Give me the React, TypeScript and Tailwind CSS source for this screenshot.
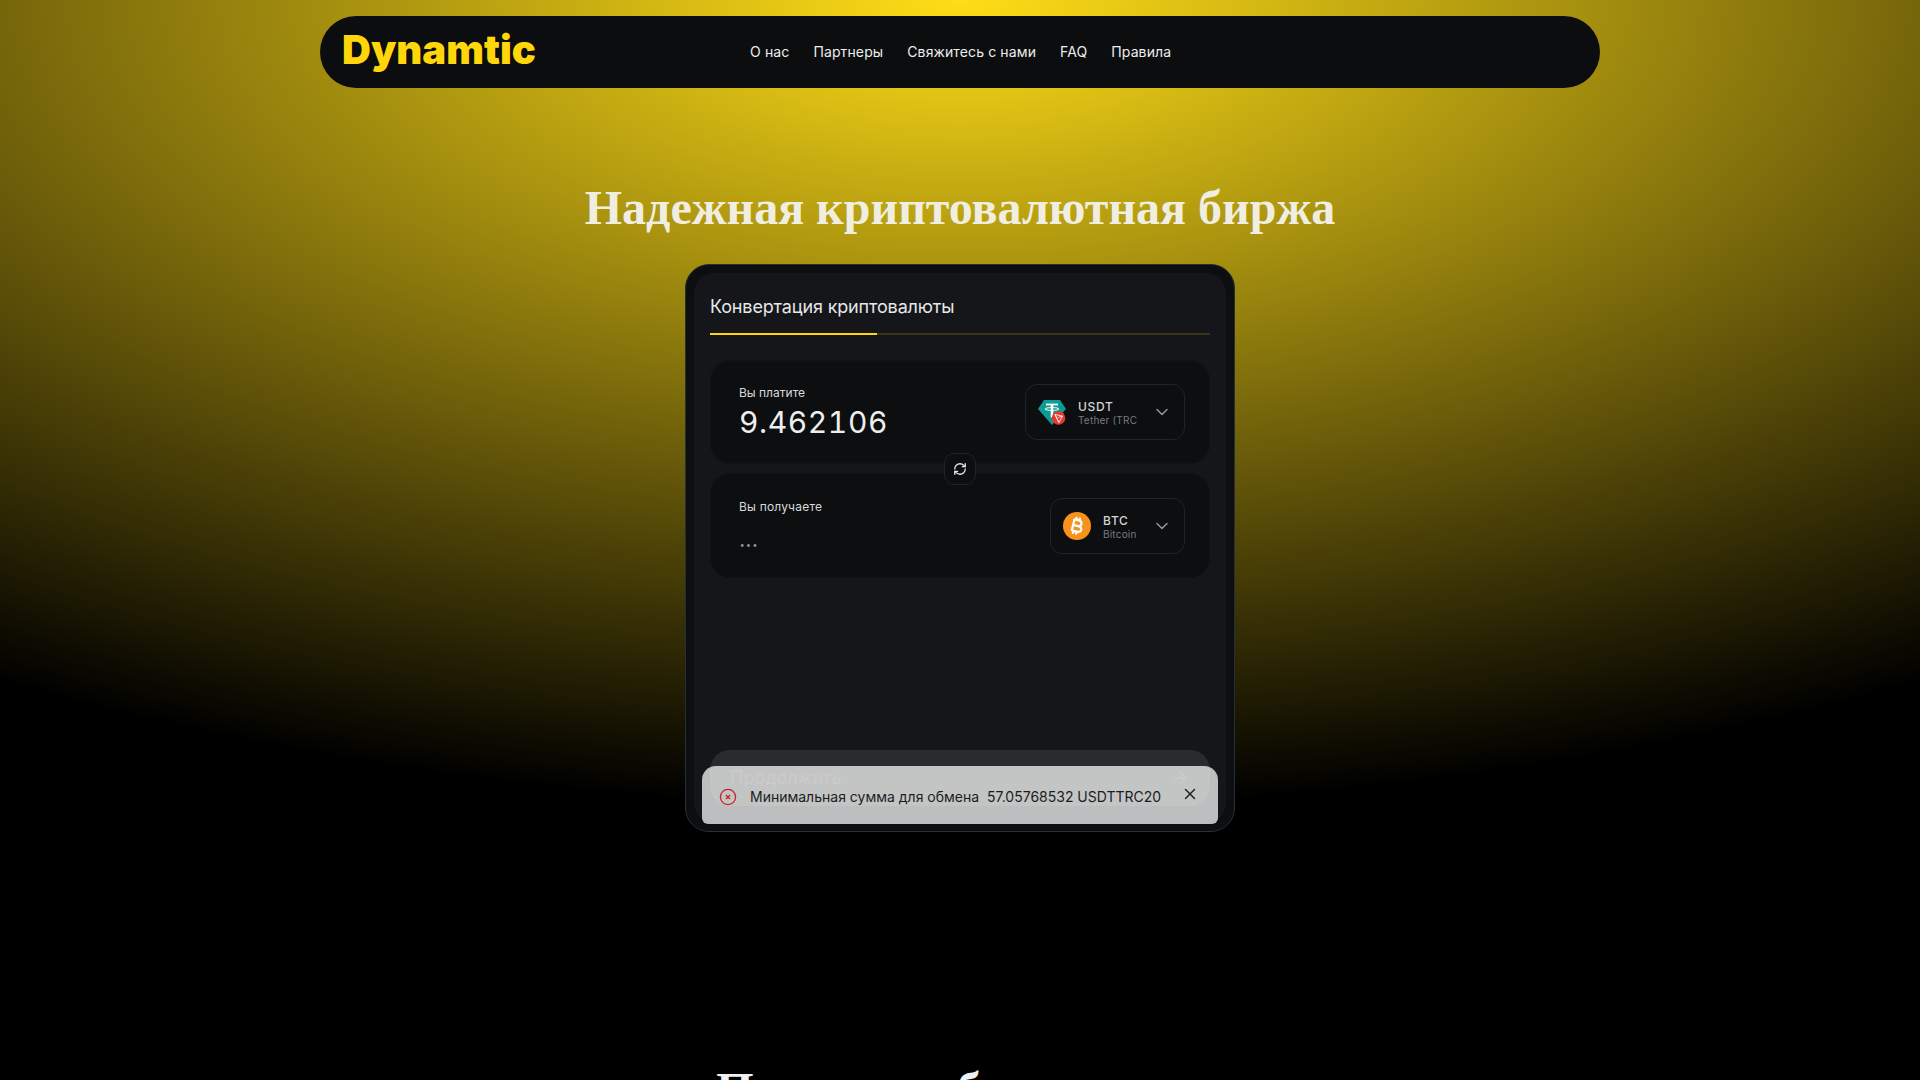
import React from "react";
import { ArrowRight, ChevronDown, RefreshCw, X } from "lucide-react";
import { FaBitcoinSign } from "react-icons/fa6";

const navItems = ["О нас", "Партнеры", "Свяжитесь с нами", "FAQ", "Правила"];

const UsdtIcon = () => (
  <svg width="28" height="28" viewBox="0 0 28 28" className="shrink-0">
    <path d="M6 2h16l6 9-14 16L0 11z" fill="#0f9a94" />
    <path d="M8 6.5h12" stroke="#fff" strokeWidth="1.8" fill="none" />
    <path d="M14 6.5v13" stroke="#fff" strokeWidth="2.6" fill="none" />
    <ellipse cx="14" cy="11" rx="7" ry="1.4" stroke="#fff" strokeWidth="1" fill="none" />
    <circle cx="20.5" cy="20" r="6.8" fill="#e8392f" />
    <path d="M17 16.5l7.5 1.6-3.6 6.4zM17 16.5l3.9 8M24.5 18.1l-4.3 1.4" stroke="#fff" strokeWidth="0.8" fill="none" />
  </svg>
);

const BtcIcon = () => (
  <div className="w-7 h-7 rounded-full bg-[#f7931a] flex items-center justify-center shrink-0">
    <FaBitcoinSign className="w-[15px] h-[18px] text-white rotate-[14deg]" />
  </div>
);

const ErrorIcon = () => (
  <svg width="18" height="18" viewBox="0 0 18 18" fill="none" className="shrink-0">
    <circle cx="9" cy="9" r="7.6" stroke="#c8232c" strokeWidth="1.3" />
    <path d="M7 7l4 4M11 7l-4 4" stroke="#c8232c" strokeWidth="1.4" />
  </svg>
);

interface CoinSelectProps {
  icon: React.ReactNode;
  code: string;
  name: string;
  width: string;
}

const CoinSelect = ({ icon, code, name, width }: CoinSelectProps) => (
  <div className={`${width} h-14 rounded-xl border border-[#1b2430] flex items-center pl-3 pr-3 shrink-0`}>
    {icon}
    <div className="ml-3 mt-[3px] flex-1 min-w-0">
      <div className="text-xs leading-[14px] -mb-px font-medium tracking-[0.7px] text-[#d4d5d7]">{code}</div>
      <div className="text-[10px] leading-[14px] tracking-[0.2px] text-[#777a7f] whitespace-nowrap">{name}</div>
    </div>
    <ChevronDown className="w-5 h-5 text-[#9a9c9f] shrink-0" strokeWidth={1.6} />
  </div>
);

const App = () => {
  return (
    <div className="h-[1080px] overflow-hidden bg-black font-['Inter',sans-serif] relative">
      <div className="h-[840px] pt-4 bg-[radial-gradient(ellipse_1780px_810px_at_960px_0,#ffdd17_0%,#000000_100%)]">
        {/* Header */}
        <header className="w-[1280px] h-[72px] mx-auto rounded-[36px] bg-[#0c0d0f] flex items-center pl-[22px]">
          <div className="w-[408px] text-[40px] font-black text-[#ffd60a] leading-none -mt-[4px]">Dynamtic</div>
          <nav className="flex gap-6 text-sm tracking-[0.12px] text-[#eceded]">
            {navItems.map((item) => (
              <a key={item}>{item}</a>
            ))}
          </nav>
        </header>

        <h1 className="mt-[92px] mb-[28px] text-center text-[48px] leading-[56px] font-bold font-['Liberation_Serif',serif] text-[#f0eee0]">
          Надежная криптовалютная биржа
        </h1>

        {/* Exchange card */}
        <div className="relative w-[550px] h-[568px] mx-auto rounded-3xl border border-[#242f36] bg-[#0d0e10] p-2">
          <div className="h-full rounded-[20px] bg-[#14161a] px-4 pt-5 pb-[17px] flex flex-col">
            <div className="text-lg leading-7 tracking-[-0.15px] text-[#e6e7e8] pb-3">Конвертация криптовалюты</div>
            <div className="h-[2px] bg-[#38351a]">
              <div className="w-[167px] h-full bg-[#ffd60a]"></div>
            </div>

            <div className="relative mt-[25px] h-[104px] rounded-[20px] border border-[#101216] bg-[#0d0e10] pl-7 pr-6 flex items-center justify-between">
              <div className="pt-[2px]">
                <div className="text-xs leading-4 mb-px text-[#d8d9da]">Вы платите</div>
                <div className="text-[30px] leading-10 tabular-nums tracking-[0.6px] text-[#eeeeee]">9.462106</div>
              </div>
              <CoinSelect icon={<UsdtIcon />} code="USDT" name="Tether (TRC" width="w-40" />
            </div>

            <div className="relative mt-[9px] h-[105px] rounded-[20px] border border-[#101216] bg-[#0d0e10] pl-7 pr-6 flex items-center justify-between">
              <div className="pt-[2px]">
                <div className="text-xs leading-4 tracking-[0.2px] text-[#d8d9da]">Вы получаете</div>
                <div className="h-10 pt-1 text-[22px] leading-10 text-[#8f9193]">...</div>
              </div>
              <CoinSelect icon={<BtcIcon />} code="BTC" name="Bitcoin" width="w-[135px]" />
              {/* Swap button */}
              <div className="absolute -top-[21px] left-[233px] w-8 h-8 rounded-[10px] border border-[#1b2430] bg-[#0d0e10] flex items-center justify-center">
                <RefreshCw className="w-3.5 h-3.5 text-[#e6e7e8]" strokeWidth={2.2} />
              </div>
            </div>

            <div className="mt-auto h-14 rounded-[20px] bg-[#2a2b2d] flex items-center justify-between pl-5 pr-5 text-[#444446]">
              <span className="text-lg">Продолжить</span>
              <ArrowRight className="w-5 h-5" />
            </div>
          </div>

          {/* Toast */}
          <div className="absolute left-4 top-[501px] w-[516px] h-[58px] rounded-t-[14px] rounded-b-md bg-white/[.72] flex items-center pl-[17px] pt-[3px] text-[#1c1d1f]">
            <ErrorIcon />
            <span className="ml-[13px] text-sm whitespace-pre">Минимальная сумма для обмена  57.05768532 USDTTRC20</span>
            <X className="absolute right-[19px] top-[19px] w-[18px] h-[18px]" strokeWidth={1.9} />
          </div>
        </div>
      </div>

      <h2 className="mt-[222px] text-center text-[48px] leading-[56px] font-bold font-['Liberation_Serif',serif] text-[#f0f0f0]">
        Почему выбирают нас
      </h2>
    </div>
  );
};

export default App;
